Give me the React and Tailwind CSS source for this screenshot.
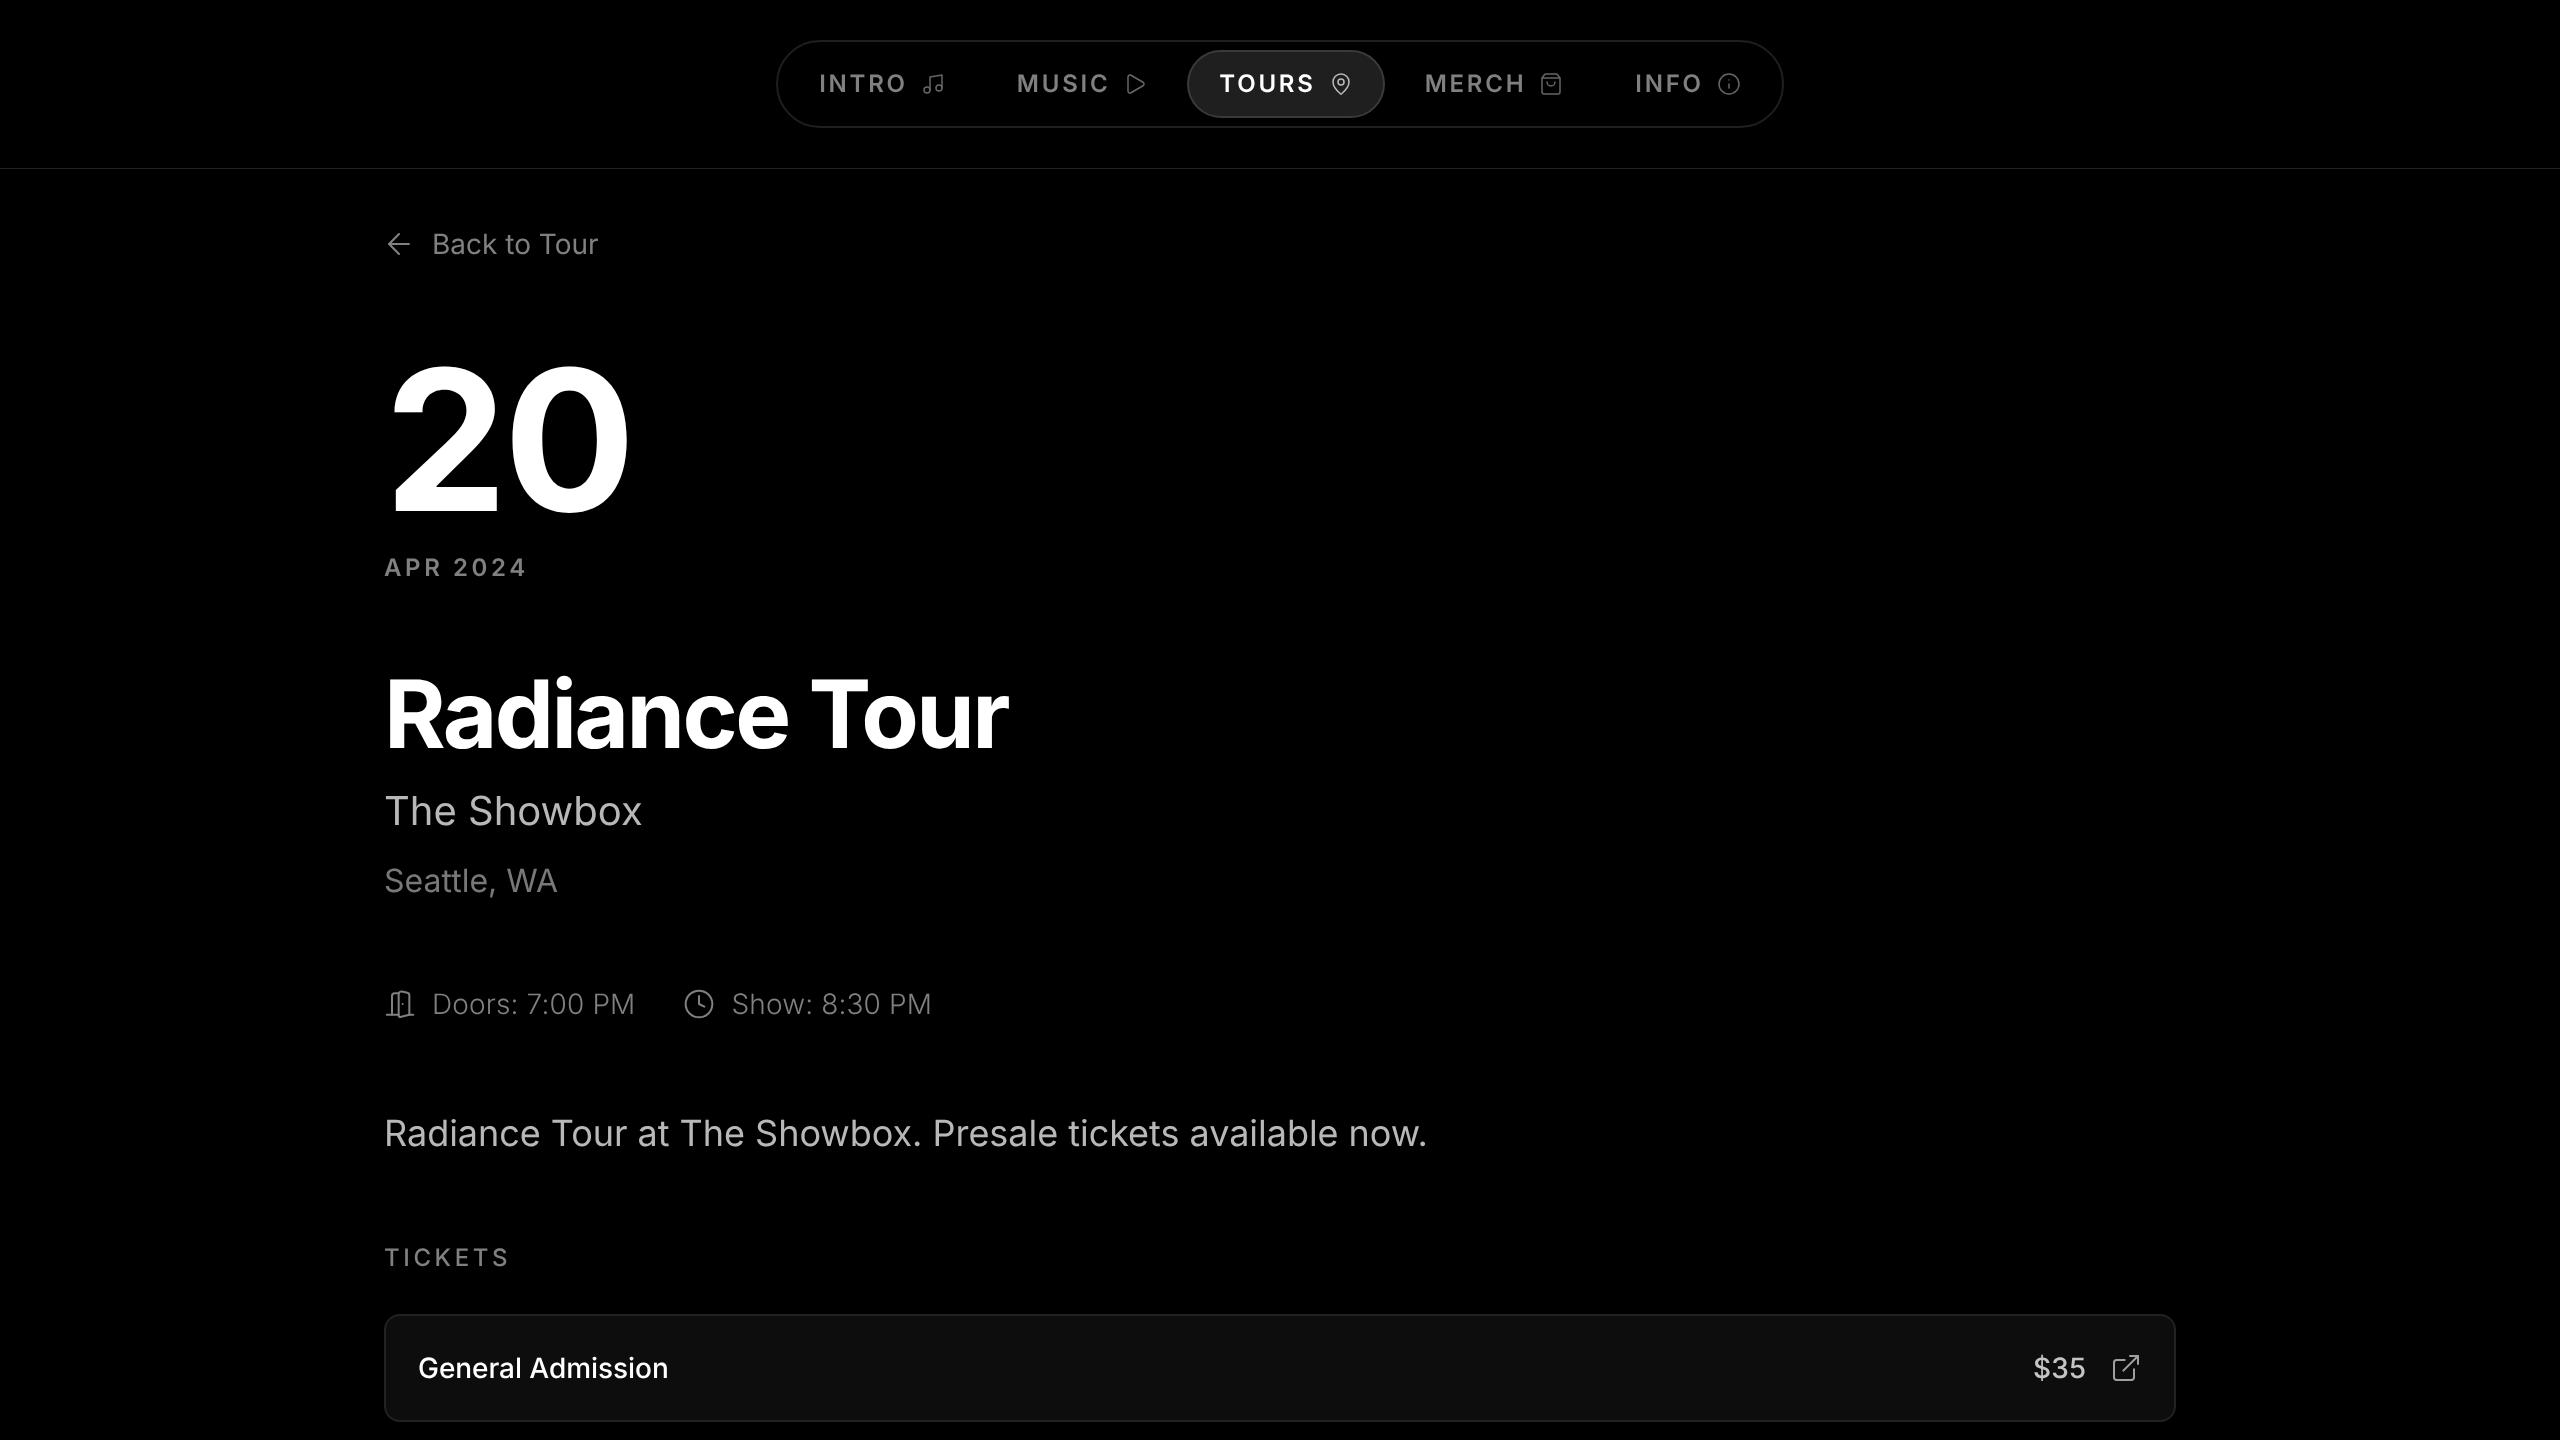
import React from 'react';
import { Music, Play, MapPin, ShoppingBag, Info, ArrowLeft, DoorOpen, Clock, ExternalLink } from 'lucide-react';

const navItems = [
  { label: 'INTRO', icon: Music },
  { label: 'MUSIC', icon: Play },
  { label: 'TOURS', icon: MapPin, active: true },
  { label: 'MERCH', icon: ShoppingBag },
  { label: 'INFO', icon: Info },
];

function NavBar() {
  return (
    <header className="h-[169px] border-b border-[#222222] flex justify-center items-start pt-10">
      <nav className="h-[88px] flex items-center gap-2 px-[9px] rounded-full border-2 border-[#1f1f1f]">
        {navItems.map(({ label, icon: Icon, active }) => (
          <a
            key={label}
            className={
              active
                ? 'h-[68px] px-[30px] flex items-center gap-[13px] rounded-full border-2 border-[#3a3a3a] bg-[#1f1f1f] text-white text-[24px] leading-none font-semibold tracking-[0.115em]'
                : 'h-[68px] px-[30px] flex items-center gap-[13px] rounded-full border-2 border-transparent text-[#808080] text-[24px] leading-none font-semibold tracking-[0.115em]'
            }
          >
            {label}
            <Icon size={24} strokeWidth={1.5} className={active ? 'text-[#bbbbbb]' : 'text-[#666666]'} />
          </a>
        ))}
      </nav>
    </header>
  );
}

export default function App() {
  return (
    <div className="h-screen overflow-hidden bg-black">
      <div className="font-['Inter',sans-serif] [text-rendering:geometricPrecision] will-change-transform">
        <NavBar />
        <main className="w-[1792px] mx-auto pt-[54px]">
          <a className="flex items-center gap-4 text-[28px] leading-[42px] text-[#808080]">
            <ArrowLeft size={34} strokeWidth={1.5} className="-ml-0.5" />
            Back to Tour
          </a>

          <div className="mt-[80px] text-[196px] leading-[192px] font-bold tracking-[-0.02em] text-white">20</div>
          <div className="mt-[15px] text-[24px] leading-[32px] font-semibold tracking-[0.15em] text-[#808080]">APR 2024</div>

          <h1 className="mt-[74px] text-[94px] leading-[112px] font-bold tracking-[-0.027em] text-white">Radiance Tour</h1>
          <p className="mt-[11px] text-[40px] leading-[60px] text-[#b8b8b8]">The Showbox</p>
          <p className="mt-[16px] text-[32px] leading-[48px] text-[#787878]">Seattle, WA</p>

          <div className="mt-[78px] flex items-center gap-12 text-[28px] leading-[42px] font-light tracking-[0.005em] text-[#808080]">
            <span className="flex items-center gap-4">
              <DoorOpen size={32} strokeWidth={1.5} />
              Doors: 7:00 PM
            </span>
            <span className="flex items-center gap-4">
              <Clock size={32} strokeWidth={1.5} />
              Show: 8:30 PM
            </span>
          </div>

          <p className="mt-[81px] text-[36px] leading-[54px] tracking-[-0.001em] text-[#b8b8b8]">
            Radiance Tour at The Showbox. Presale tickets available now.
          </p>

          <h2 className="mt-[82px] text-[24px] leading-[32px] font-medium tracking-[0.15em] text-[#808080]">TICKETS</h2>

          <div className="mt-10 h-[108px] px-8 flex items-center justify-between rounded-2xl border-2 border-[#222222] bg-[#0d0d0d]">
            <span className="text-[28px] font-medium tracking-[-0.002em] text-white">General Admission</span>
            <span className="flex items-center gap-6 text-[#c4c4c4]">
              <span className="text-[28px] font-medium">$35</span>
              <ExternalLink size={32} strokeWidth={1.5} className="text-[#a0a0a0]" />
            </span>
          </div>
        </main>
      </div>
    </div>
  );
}
